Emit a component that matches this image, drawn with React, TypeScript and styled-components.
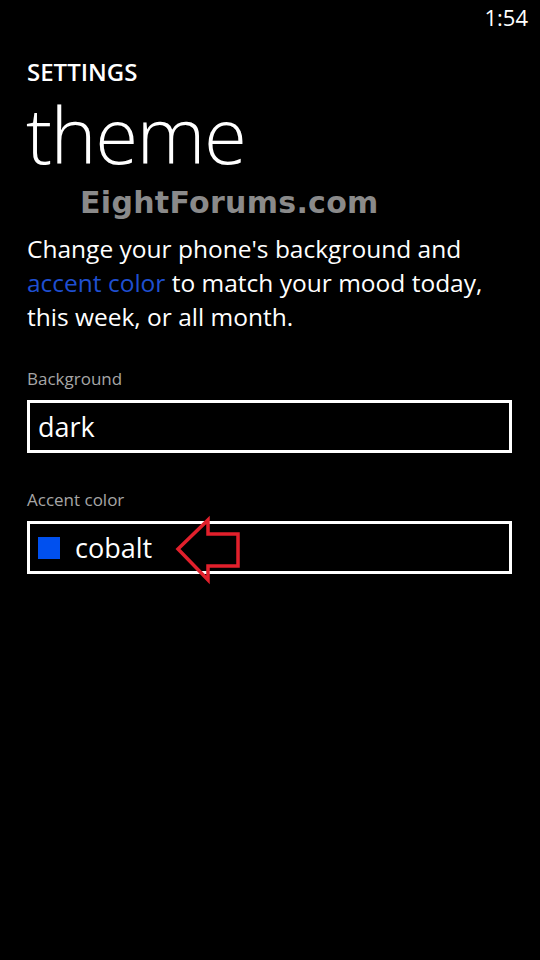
import React from "react";
import styled, { createGlobalStyle } from "styled-components";

const GlobalStyle = createGlobalStyle`
  html, body {
    margin: 0;
    padding: 0;
    background: #000000;
  }
  body {
    font-family: "Open Sans", "Noto Sans", sans-serif;
    color: #ffffff;
  }
`;

const PageWrapper = styled.div`
  width: 540px;
  height: 960px;
  background: #000000;
  display: flex;
  flex-direction: column;
  overflow: hidden;
`;

const StatusBar = styled.div`
  display: flex;
  justify-content: flex-end;
  height: 40px;
  padding: 6px 12px 0 0;
  box-sizing: border-box;
`;

const Clock = styled.span`
  font-size: 22px;
  line-height: 22px;
  font-weight: 400;
  color: #ffffff;
`;

const ContentArea = styled.div`
  display: flex;
  flex-direction: column;
  padding: 0 28px 0 27px;
`;

const AppTitle = styled.div`
  margin-top: 20px;
  font-size: 24px;
  line-height: 24px;
  font-weight: 600;
  letter-spacing: 0;
`;

const PageTitle = styled.div`
  margin-top: 10px;
  font-size: 78px;
  line-height: 80px;
  font-weight: 300;
  letter-spacing: -1.5px;
  margin-left: -1px;
`;

const Watermark = styled.div`
  margin: 14px 0 0 53px;
  font-family: "DejaVu Sans", Verdana, sans-serif;
  font-weight: 700;
  font-size: 30px;
  line-height: 30px;
  color: #8a8a8a;
  letter-spacing: 0.3px;
`;

const Description = styled.p`
  width: 470px;
  margin: 14px 0 0 0;
  font-size: 24.5px;
  line-height: 34px;
  font-weight: 400;
  letter-spacing: 0;
`;

const AccentText = styled.span`
  color: #1f4fd1;
`;

const FieldLabel = styled.div<{ $gap: number }>`
  margin-top: ${(p) => p.$gap}px;
  font-size: 17px;
  line-height: 18px;
  color: #a6a6a6;
`;

const PickerBox = styled.div`
  position: relative;
  margin-top: 12px;
  height: 53px;
  border: 3px solid #ffffff;
  box-sizing: border-box;
  display: flex;
  align-items: center;
  gap: 15px;
  padding-left: 8px;
`;

const PickerValue = styled.span`
  font-size: 27px;
  line-height: 30px;
  color: #ffffff;
`;

const Swatch = styled.span<{ $color: string }>`
  width: 22px;
  height: 22px;
  background: ${(p) => p.$color};
`;

const ArrowMark = styled.svg`
  position: absolute;
  left: 140px;
  top: -10px;
`;

const App = () => {
  return (
    <>
      <GlobalStyle />
      <PageWrapper>
        <StatusBar>
          <Clock>1:54</Clock>
        </StatusBar>
        <ContentArea>
          <AppTitle>SETTINGS</AppTitle>
          <PageTitle>theme</PageTitle>
          <Watermark>EightForums.com</Watermark>
          <Description>
            Change your phone's background and{" "}
            <AccentText>accent color</AccentText> to match your mood today,
            this week, or all month.
          </Description>
          <FieldLabel $gap={36}>Background</FieldLabel>
          <PickerBox>
            <PickerValue>dark</PickerValue>
          </PickerBox>
          <FieldLabel $gap={38}>Accent color</FieldLabel>
          <PickerBox>
            <Swatch $color="#0050ef" />
            <PickerValue>cobalt</PickerValue>
            <ArrowMark width="76" height="74" viewBox="0 0 76 74">
              <polygon
                points="8,35 38,6 38,20 68,20 68,52 38,52 38,66"
                fill="none"
                stroke="#e2202c"
                strokeWidth="3.5"
                strokeLinejoin="miter"
              />
            </ArrowMark>
          </PickerBox>
        </ContentArea>
      </PageWrapper>
    </>
  );
};

export default App;
